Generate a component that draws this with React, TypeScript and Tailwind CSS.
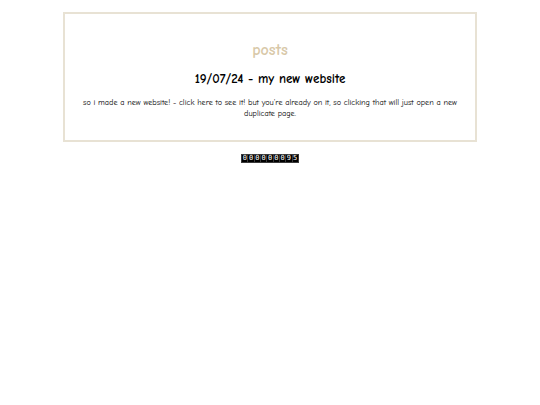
import React from 'react';

const font = { fontFamily: '"Comic Sans MS", "Comic Neue", "Open Sans", "Liberation Sans", sans-serif' };

function HitCounter({ value }: { value: string }) {
  return (
    <div className="flex justify-center mt-[12px]">
      <div className="flex gap-[1px] bg-[#3a3a3a] p-[1px]">
        {value.split('').map((d, i) => (
          <span
            key={i}
            className="flex h-[7px] w-[5.3px] items-center justify-center bg-black text-[7px] leading-none text-white font-['DejaVu_Sans_Mono',monospace]"
          >
            {d}
          </span>
        ))}
      </div>
    </div>
  );
}

export default function App() {
  return (
    <div className="min-h-[405px] w-full bg-white pt-[12px]" style={font}>
      <div className="mx-auto w-[414px] border-2 border-[#e8e2d4] px-4 pt-[26px] pb-[21px] text-center">
        <h2 className="text-[16px] font-bold leading-[20px] text-[#d8c8a8]">posts</h2>
        <h3 className="mt-[11px] text-[13px] font-bold leading-[16px] text-black">19/07/24 - my new website</h3>
        <p className="mt-[10px] text-[8.2px] leading-[11px] text-black">
          so i made a new website! - click here to see it! but you're already on it, so clicking that will just open a new duplicate page.
        </p>
      </div>
      <HitCounter value="000000095" />
    </div>
  );
}
